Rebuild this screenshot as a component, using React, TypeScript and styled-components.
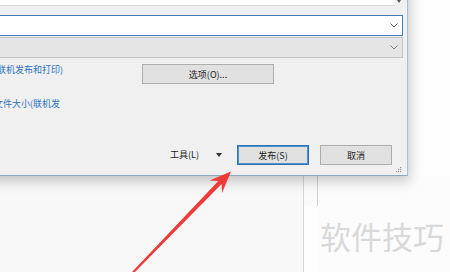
import React from 'react';
import styled, { createGlobalStyle } from 'styled-components';

const GlobalStyle = createGlobalStyle`
  html, body {
    margin: 0;
    padding: 0;
  }
  body {
    font-family: "Noto Sans CJK SC", "Noto Sans", sans-serif;
  }
`;

const Screen = styled.div`
  position: relative;
  width: 450px;
  height: 272px;
  overflow: hidden;
  background: #fefefe;
`;

// page behind the dialog
const Backdrop = styled.div`
  display: flex;
  height: 100%;
  padding-top: 176px;
  box-sizing: border-box;
`;
const DocArea = styled.div`
  width: 303px;
  background: #f8f8f8;
  border-right: 1px solid #d4d4d4;
`;
const Gutter = styled.div`
  width: 13px;
  height: 30px;
  border-right: 1px solid #d0d0d0;
  background: #fbfbfb;
`;
const SidePane = styled.div`
  flex: 1;
  padding: 44px 0 0 2px;
  background: #fcfcfc;
`;
const Watermark = styled.span`
  display: block;
  font-size: 31px;
  line-height: 1;
  color: #d9d9d9;
  white-space: nowrap;
`;

// the dialog window
const Dialog = styled.div`
  position: absolute;
  left: -120px;
  top: -20px;
  width: 528px;
  height: 196px;
  box-sizing: border-box;
  display: flex;
  flex-direction: column;
  padding: 0 4px 0 95px;
  background: #f0f0f0;
  border: 1px solid #a2c1e0;
  border-bottom-color: #8ba6c1;
  box-shadow: 2px 5px 12px rgba(0, 0, 0, 0.22);
  font-size: 9px;
  color: #1b1b1b;
`;

const ListBox = styled.div`
  display: flex;
  height: 25px;
`;
const ListField = styled.div`
  flex: 1;
  background: #ffffff;
  border-bottom: 1px solid #d9d9d9;
`;
const ScrollTrack = styled.div`
  width: 8px;
  display: flex;
  flex-direction: column;
  justify-content: flex-end;
  align-items: center;
  padding-bottom: 3px;
  box-sizing: border-box;
`;
const ScrollArrow = styled.span`
  width: 0;
  height: 0;
  border-left: 2px solid transparent;
  border-right: 2px solid transparent;
  border-top: 3px solid #555;
`;

const Combo = styled.div<{ $focused?: boolean }>`
  height: 21px;
  margin-top: ${p => (p.$focused ? '9px' : '1px')};
  box-sizing: border-box;
  display: flex;
  align-items: center;
  justify-content: flex-end;
  padding-right: 4px;
  background: ${p => (p.$focused ? '#ffffff' : '#e5e5e5')};
  border: 1px solid ${p => (p.$focused ? '#3f7db6' : '#c3c3c3')};
  color: ${p => (p.$focused ? '#555' : '#808080')};
`;

const OptionsRow = styled.div`
  display: flex;
  margin-top: 6px;
`;
const LinkColumn = styled.div`
  width: 166px;
  display: flex;
  flex-direction: column;
  gap: 22px;
`;
const Link = styled.span`
  color: #2f72c2;
  line-height: 12px;
  white-space: nowrap;
`;

const Button = styled.button<{ $width: number; $primary?: boolean }>`
  width: ${p => p.$width}px;
  height: 20px;
  padding: 0;
  box-sizing: border-box;
  font-family: inherit;
  font-size: 9px;
  line-height: 1;
  color: #1b1b1b;
  background: #e1e1e1;
  border: 1px solid ${p => (p.$primary ? '#2c74b8' : '#adadad')};
  box-shadow: ${p => (p.$primary ? 'inset 0 0 0 1px #4f8fcb' : 'none')};
`;

const Footer = styled.div`
  margin-top: auto;
  margin-right: 11px;
  display: flex;
  align-items: center;
  justify-content: flex-end;
`;
const ToolsLabel = styled.span`
  line-height: 12px;
  margin-right: 17px;
`;
const DropArrow = styled.span`
  width: 0;
  height: 0;
  border-left: 3px solid transparent;
  border-right: 3px solid transparent;
  border-top: 4px solid #333;
  margin-right: 15px;
`;
const ButtonGap = styled.span`
  width: 11px;
`;

const GripRow = styled.div`
  height: 10px;
  display: flex;
  justify-content: flex-end;
  padding: 2px 1px 0 0;
  box-sizing: border-box;
`;

const Overlay = styled.svg`
  position: absolute;
  left: 0;
  top: 0;
  pointer-events: none;
`;

const Chevron = () => (
  <svg width="8" height="5" viewBox="0 0 8 5">
    <polyline points="0.5,0.5 4,4 7.5,0.5" fill="none" stroke="currentColor" strokeWidth="1" />
  </svg>
);

const Grip = () => (
  <svg width="6" height="6" viewBox="0 0 6 6" fill="#9a9a9a">
    <rect x="4" y="0" width="1.2" height="1.2" />
    <rect x="2" y="2" width="1.2" height="1.2" />
    <rect x="4" y="2" width="1.2" height="1.2" />
    <rect x="0" y="4" width="1.2" height="1.2" />
    <rect x="2" y="4" width="1.2" height="1.2" />
    <rect x="4" y="4" width="1.2" height="1.2" />
  </svg>
);

const RedArrow = () => (
  <Overlay width="450" height="272" viewBox="0 0 450 272">
    <polygon
      points="131.5,272.5 218.3,180.9 209.5,180.6 231,171.5 222,193 221.6,184.1 134.5,272.5"
      fill="#ef3a3a"
    />
  </Overlay>
);

export default function App() {
  return (
    <>
      <GlobalStyle />
      <Screen>
        <Backdrop>
          <DocArea />
          <Gutter />
          <SidePane>
            <Watermark>软件技巧</Watermark>
          </SidePane>
        </Backdrop>
        <Dialog>
          <ListBox>
            <ListField />
            <ScrollTrack>
              <ScrollArrow />
            </ScrollTrack>
          </ListBox>
          <Combo $focused>
            <Chevron />
          </Combo>
          <Combo>
            <Chevron />
          </Combo>
          <OptionsRow>
            <LinkColumn>
              <Link>标准(联机发布和打印)</Link>
              <Link>最小文件大小(联机发</Link>
            </LinkColumn>
            <Button $width={132}>选项(O)...</Button>
          </OptionsRow>
          <Footer>
            <ToolsLabel>工具(L)</ToolsLabel>
            <DropArrow />
            <Button $width={72} $primary>发布(S)</Button>
            <ButtonGap />
            <Button $width={72}>取消</Button>
          </Footer>
          <GripRow>
            <Grip />
          </GripRow>
        </Dialog>
        <RedArrow />
      </Screen>
    </>
  );
}
